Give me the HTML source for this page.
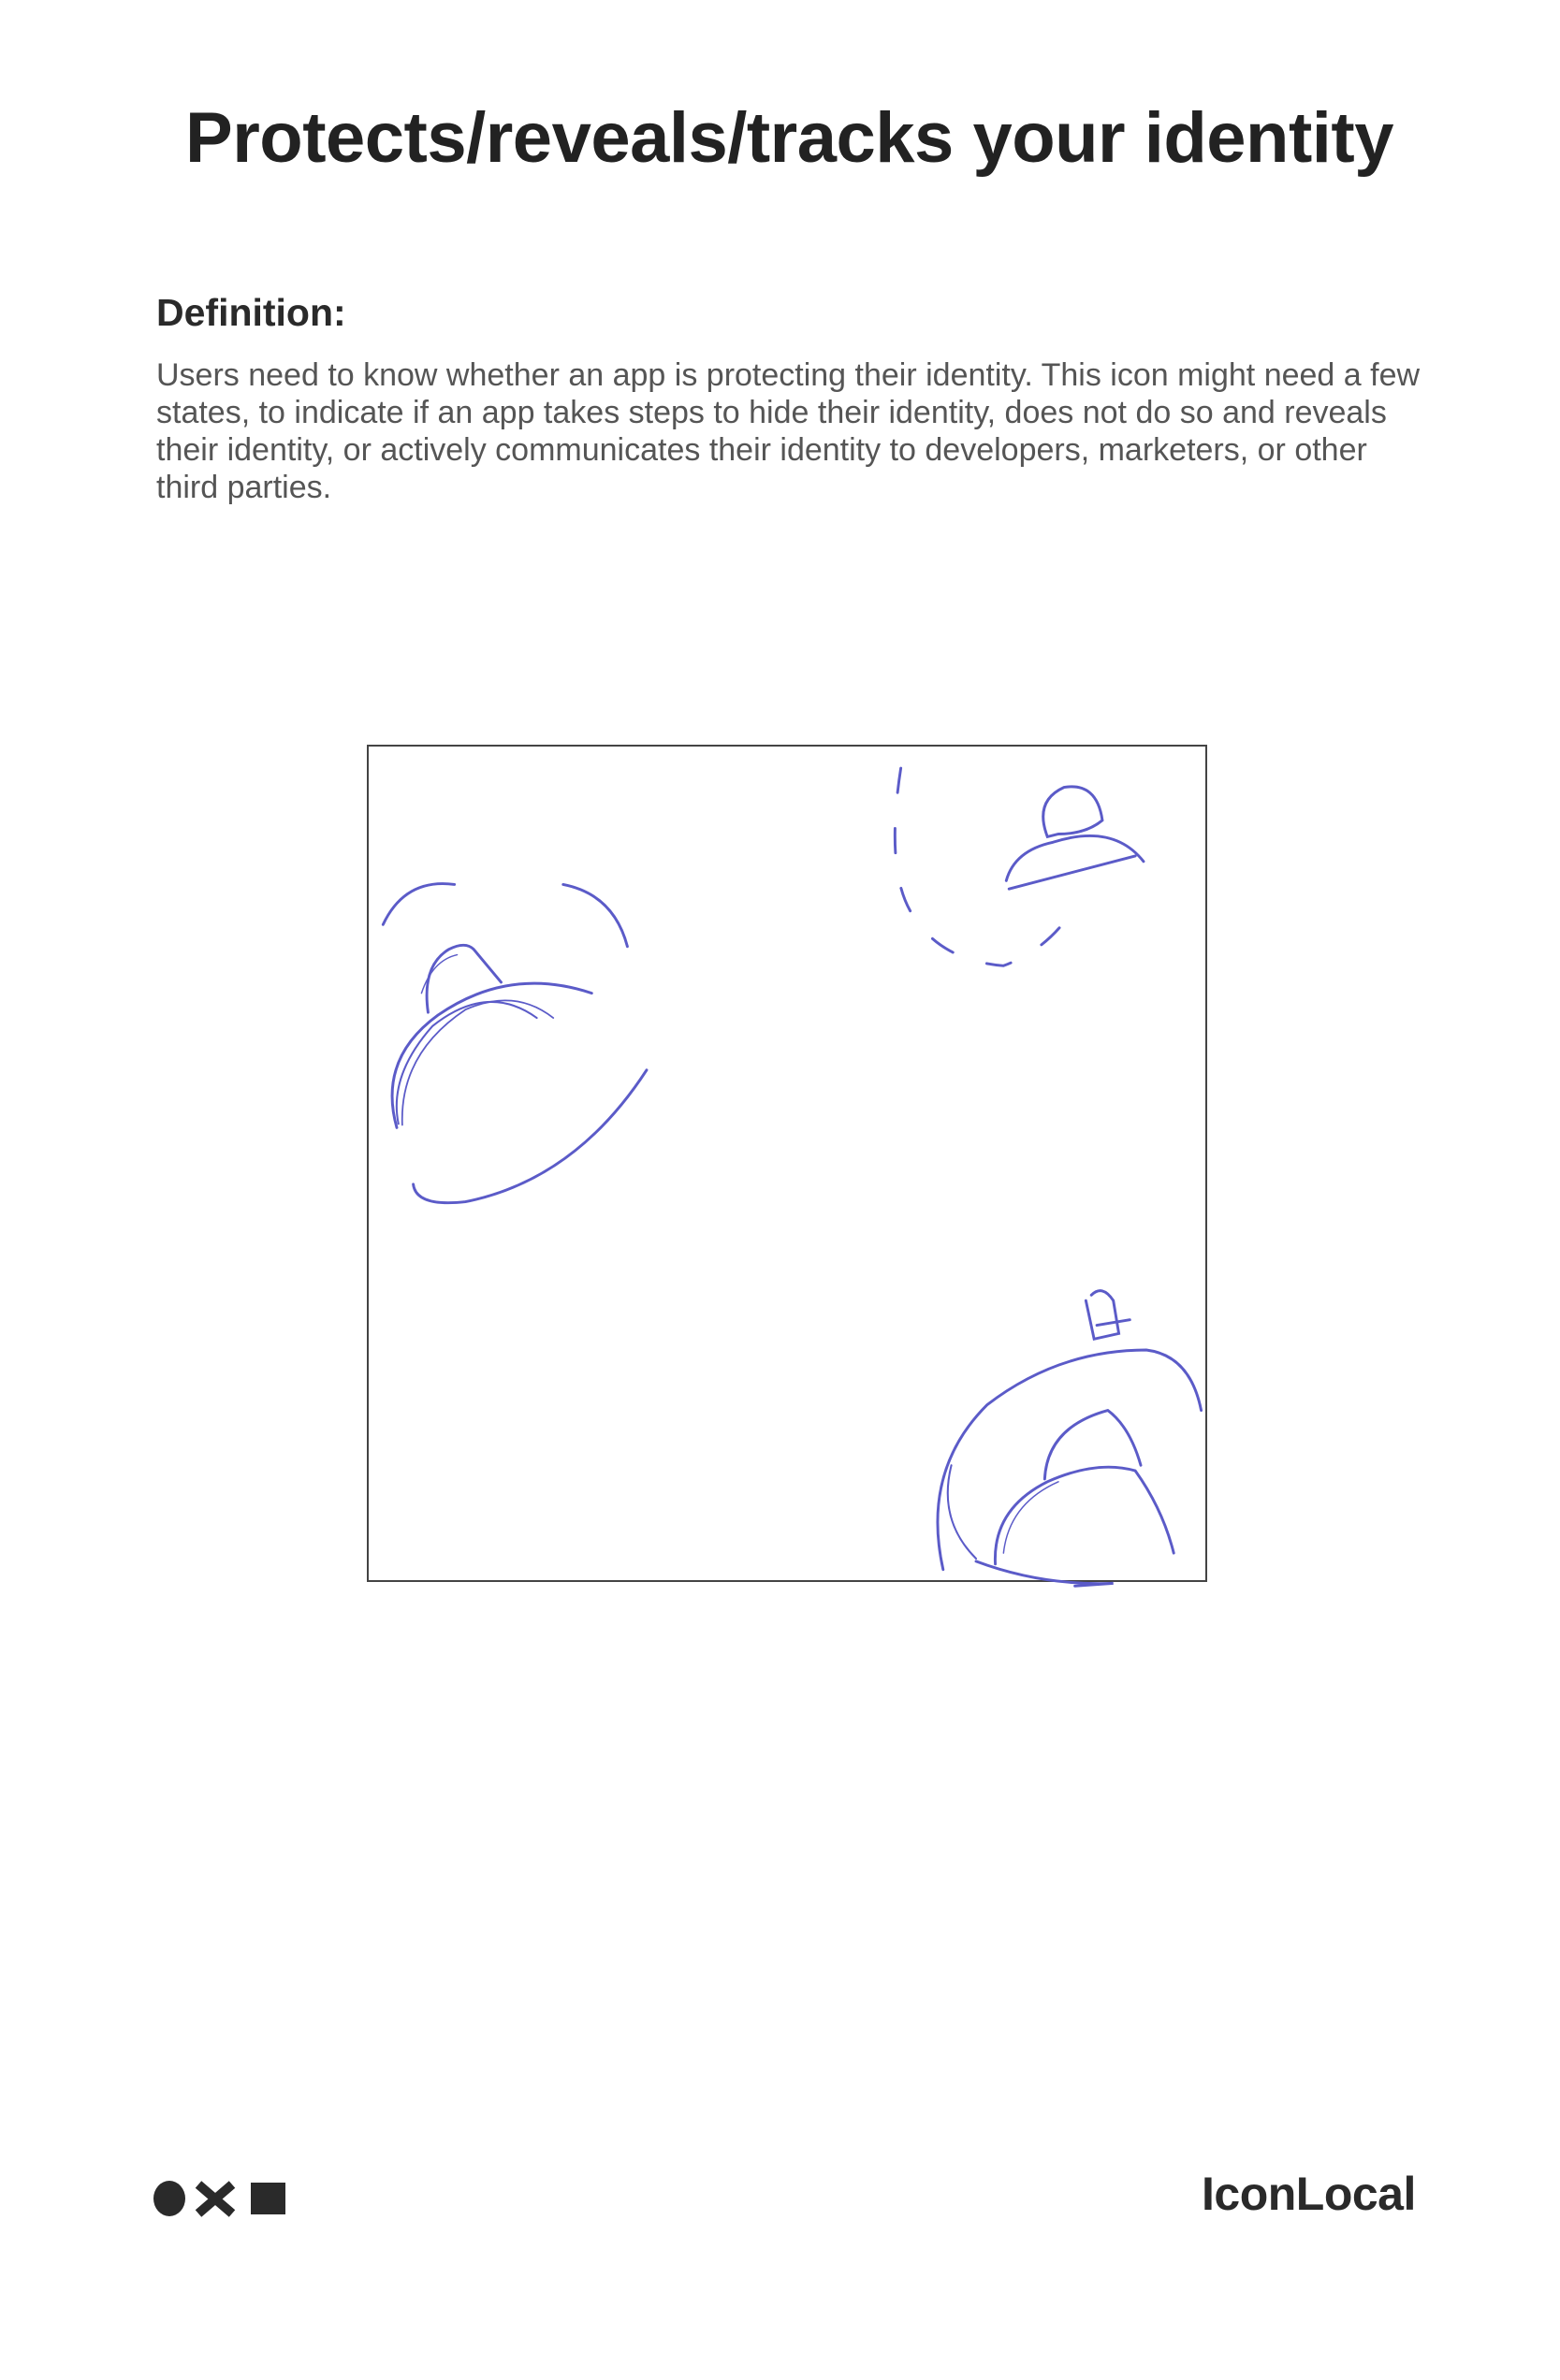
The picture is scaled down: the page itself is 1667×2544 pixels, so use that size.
<!DOCTYPE html>
<html><head><meta charset="utf-8"><style>
html,body{margin:0;padding:0;background:#fff;}
body{width:1667px;height:2544px;position:relative;overflow:hidden;font-family:"Liberation Sans",Arial,sans-serif;}
h1{position:absolute;left:10px;width:1667px;top:104px;margin:0;text-align:center;font-size:76px;font-weight:bold;color:#222;letter-spacing:-0.5px;}
.def{position:absolute;left:167px;top:311px;font-size:41px;font-weight:bold;color:#2a2a2a;}
.body{position:absolute;left:167px;top:381px;white-space:nowrap;font-size:34px;line-height:40px;color:#555;}
.box{position:absolute;left:392px;top:796px;width:898px;height:895px;border:2px solid #444;box-sizing:border-box;}
svg.sk{position:absolute;left:380px;top:780px;}
.logo{position:absolute;left:1284px;top:2316px;font-size:50px;font-weight:bold;color:#2a2a2a;letter-spacing:-0.5px;}
</style></head><body>
<h1>Protects/reveals/tracks your identity</h1>
<div class="def">Definition:</div>
<div class="body">Users need to know whether an app is protecting their identity. This icon might need a few<br>states, to indicate if an app takes steps to hide their identity, does not do so and reveals<br>their identity, or actively communicates their identity to developers, marketers, or other<br>third parties.</div>
<div class="box"></div>
<svg class="sk" width="920" height="920" viewBox="0 0 1568 1568" fill="none" stroke="#5b5bc8" stroke-width="5" stroke-linecap="round">
<path d="M50,355 Q90,270 180,282"/>
<path d="M378,282 Q470,300 495,395"/>
<path d="M75,725 Q40,600 150,520 Q280,430 430,480"/>
<path d="M85,720 Q80,590 200,510 Q290,470 360,525" stroke-width="3"/>
<path d="M78,718 Q60,630 140,540 Q240,460 330,525" stroke-width="3.5"/>
<path d="M132,515 Q120,430 170,400 Q200,385 215,400 L265,460"/>
<path d="M120,480 Q140,420 185,410" stroke-width="2.5"/>
<path d="M105,828 Q110,870 200,860 Q400,820 530,620"/>
<path d="M993,70 Q965,250 1010,330 Q1060,420 1180,430 Q1260,400 1305,330" stroke-dasharray="45 65"/>
<path d="M1260,195 Q1235,130 1290,105 Q1350,95 1360,165 Q1330,190 1280,190 Z"/>
<path d="M1185,275 Q1200,220 1270,205 Q1380,170 1435,240"/>
<path d="M1190,290 L1420,230"/>
<path d="M1330,1040 L1345,1110 L1390,1100 L1380,1040 Q1360,1010 1340,1030"/>
<path d="M1350,1085 L1410,1075"/>
<path d="M1070,1530 Q1030,1350 1150,1230 Q1280,1130 1440,1130 Q1520,1140 1540,1240"/>
<path d="M1130,1510 Q1060,1440 1085,1340" stroke-width="3.5"/>
<path d="M1130,1515 Q1250,1560 1380,1555 L1310,1560"/>
<path d="M1165,1520 Q1160,1420 1260,1370 Q1350,1330 1420,1350 Q1470,1420 1490,1500"/>
<path d="M1255,1365 Q1260,1270 1370,1240 Q1410,1270 1430,1340"/>
<path d="M1180,1500 Q1190,1410 1280,1370" stroke-width="2.5"/>
</svg>
<svg style="position:absolute;left:163px;top:2330px" width="142" height="40" viewBox="0 0 142 40">
<ellipse cx="18" cy="20" rx="17" ry="19" fill="#2a2a2a"/>
<path d="M49,5 L85,36 M85,5 L49,36" stroke="#2a2a2a" stroke-width="10"/>
<rect x="105" y="3" width="37" height="34" fill="#2a2a2a"/>
</svg>
<div class="logo">IconLocal</div>
</body></html>
